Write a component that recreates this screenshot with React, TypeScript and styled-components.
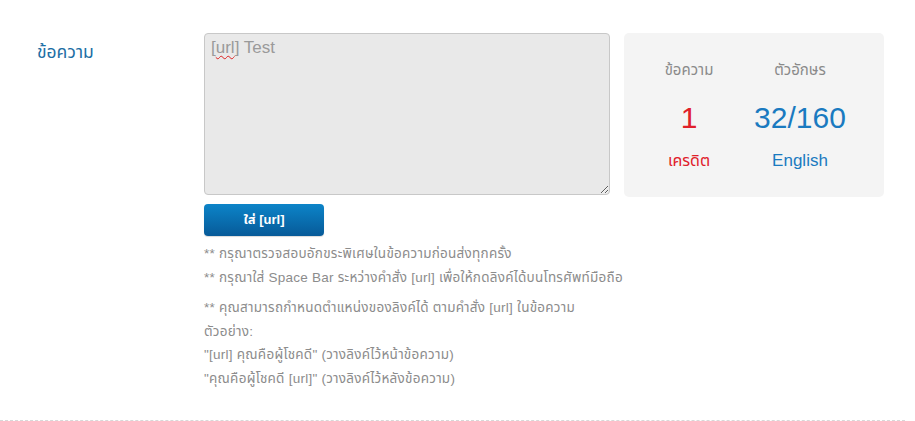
import React from "react";
import styled, { createGlobalStyle } from "styled-components";

const Global = createGlobalStyle`
  html, body { margin: 0; padding: 0; background: #fff; }
  body { font-family: "Liberation Sans", Arial, "Noto Sans Thai", "Noto Sans", sans-serif; }
`;

const Page = styled.div`
  width: 915px;
  height: 421px;
  overflow: hidden;
`;

const Section = styled.div`
  display: grid;
  grid-template-columns: 204px 1fr;
  padding-top: 33px;
  padding-bottom: 30px;
  border-bottom: 1px dashed #d8d8d8;
  width: 905px;
  box-sizing: border-box;
`;

const Label = styled.div`
  padding-left: 37px;
  padding-top: 6px;
  font-size: 17.5px;
  color: #1c6ea4;
`;

const Field = styled.div`
  display: flex;
  flex-direction: column;
`;

const TopRow = styled.div`
  display: flex;
  gap: 14px;
  align-items: flex-start;
`;

const Area = styled.div`
  width: 406px;
  height: 162px;
  box-sizing: border-box;
  background: #e9e9e9;
  border: 1px solid #c8c8c8;
  border-radius: 4px;
  padding: 4px 6px;
  font-size: 17px;
  color: #9a9a9a;
  resize: both;
  overflow: auto;
`;

const Misspelt = styled.span`
  text-decoration: underline wavy #d22;
  text-decoration-thickness: 1px;
  text-underline-offset: 2px;
`;

const Stats = styled.div`
  width: 260px;
  height: 164px;
  box-sizing: border-box;
  background: #f4f4f4;
  border-radius: 5px;
  display: grid;
  grid-template-columns: 130px 92px;
  grid-template-rows: 44px 52px 34px;
  padding: 15px 0 0 0;
  text-align: center;
  align-items: center;
`;

const Head = styled.div`
  font-size: 15px;
  color: #8a8a8a;
`;

const Big = styled.div<{ $tone: string }>`
  font-size: 30px;
  color: ${(p) => p.$tone};
`;

const Sub = styled.div<{ $tone: string; $size: number }>`
  font-size: ${(p) => p.$size}px;
  color: ${(p) => p.$tone};
`;

const Button = styled.button`
  margin-top: 7px;
  width: 120px;
  height: 32px;
  border: none;
  border-radius: 4px;
  background: linear-gradient(#0c84c8, #075a98);
  color: #fff;
  font-family: inherit;
  font-size: 13px;
  font-weight: bold;
  cursor: pointer;
  box-shadow: 0 1px 1px rgba(0,0,0,0.15);
`;

const Notes = styled.div`
  margin-top: 6px;
  font-size: 13.5px;
  letter-spacing: 0.25px;
  color: #8c8c8c;
`;

const Para = styled.div<{ $gap?: number }>`
  margin-top: ${(p) => p.$gap ?? 0}px;
  line-height: 23.5px;
`;

export default function App() {
  return (
    <Page>
      <Global />
      <Section>
        <Label>ข้อความ</Label>
        <Field>
          <TopRow>
            <Area>
              [<Misspelt>url</Misspelt>] Test
            </Area>
            <Stats>
              <Head>ข้อความ</Head>
              <Head>ตัวอักษร</Head>
              <Big $tone="#e0202a">1</Big>
              <Big $tone="#1a7ac0">32/160</Big>
              <Sub $tone="#e0202a" $size={16}>เครดิต</Sub>
              <Sub $tone="#1a7ac0" $size={17}>English</Sub>
            </Stats>
          </TopRow>
          <Button>ใส่ [url]</Button>
          <Notes>
            <Para>** กรุณาตรวจสอบอักขระพิเศษในข้อความก่อนส่งทุกครั้ง</Para>
            <Para>** กรุณาใส่ Space Bar ระหว่างคำสั่ง [url] เพื่อให้กดลิงค์ได้บนโทรศัพท์มือถือ</Para>
            <Para $gap={7}>** คุณสามารถกำหนดตำแหน่งของลิงค์ได้ ตามคำสั่ง [url] ในข้อความ</Para>
            <Para>ตัวอย่าง:</Para>
            <Para>"[url] คุณคือผู้โชคดี" (วางลิงค์ไว้หน้าข้อความ)</Para>
            <Para>"คุณคือผู้โชคดี [url]" (วางลิงค์ไว้หลังข้อความ)</Para>
          </Notes>
        </Field>
      </Section>
    </Page>
  );
}
